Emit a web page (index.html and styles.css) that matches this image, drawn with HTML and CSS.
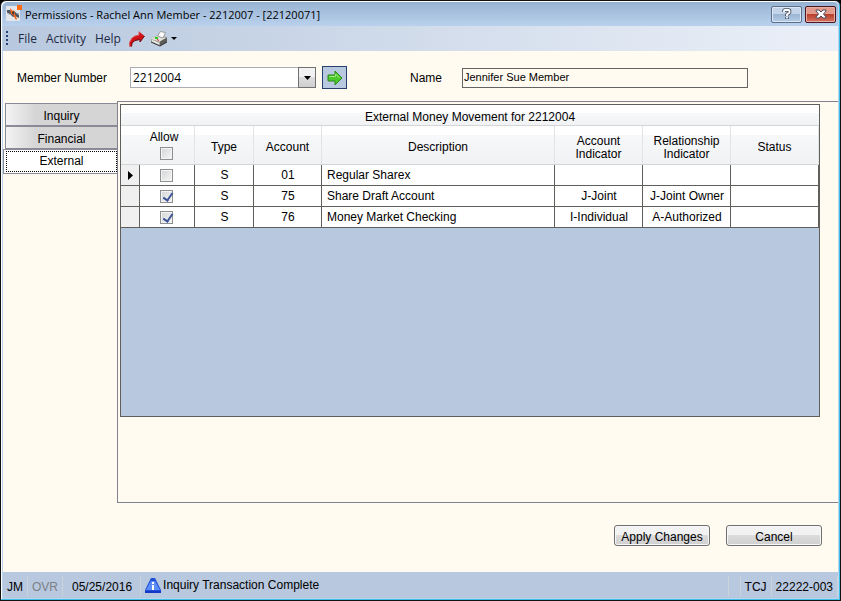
FILE: index.html
```html
<!DOCTYPE html>
<html lang="en">
<head>
    <meta charset="UTF-8">
    <meta name="viewport" content="width=device-width, initial-scale=1.0">
    <title>Permissions</title>
    <link rel="stylesheet" href="styles.css">
</head>
<body>
    <div class="window">
        <header class="title-bar">
            <svg class="app-icon" width="16" height="16" viewBox="0 0 16 16">
                <rect x="0" y="1" width="14" height="15" fill="#e3e6ea"/>
                <path d="M1 5h3l2 2 2-1 5 4v3l-4-2-2 1-3-3-3-1z" fill="#4b5560"/>
                <path d="M4 3l3 3 1-1 1 4 2 5-1 1-3-5-2-1z" fill="#f0641e"/>
                <path d="M1 7l3 2-1 1zM10 8h3v2z" fill="#a4a9ae"/>
                <path d="M7 6l1 1v3L6 8z" fill="#2b3038"/>
                <rect x="11" y="0" width="5" height="5" fill="#ff6a13"/>
            </svg>
            <h1>Permissions - Rachel Ann Member - 2212007 - [22120071]</h1>
            <button class="caption-button" type="button" aria-label="Help">
                <svg width="10" height="12" viewBox="0 0 10 12">
                    <path d="M2 4V3q0-1 1-1h3.500q1 0 1 1v1.500L5 6.500V8M5 9v2" fill="none" stroke="#4a5264" stroke-width="3.600"/>
                    <path d="M2 4V3q0-1 1-1h3.500q1 0 1 1v1.500L5 6.500V8M5 9v1.500" fill="none" stroke="#fff" stroke-width="1.800"/>
                </svg>
            </button>
            <button class="caption-button close" type="button" aria-label="Close">
                <svg width="12" height="10" viewBox="0 0 12 10">
                    <path d="M1 1h3l2 2 2-2h3v1L8.500 5 11 8v1H8L6 7 4 9H1V8l2.500-3L1 2z" fill="#fff" stroke="#4b4c5c"/>
                </svg>
            </button>
        </header>

        <nav class="menu-bar">
            <svg width="3" height="15" viewBox="0 0 3 15" fill="#27417b">
                <path d="M0 0h2v2H0zM0 4h2v2H0zM0 8h2v2H0zM0 12h2v2H0z"/>
            </svg>
            <a href="#">File</a>
            <a href="#">Activity</a>
            <a href="#">Help</a>
            <button class="tool" type="button" aria-label="Forward">
                <svg width="16" height="16" viewBox="0 0 16 16">
                    <path d="M.5 15.500v-4L3 7l3-2 4-1V.5L15.500 5 11 11V8.500L6 9.500l-3 2.500-.5 3.500z" fill="#cf1218"/>
                    <path d="M.5 15.500v-4L3 7l3-2 4-1V.5" fill="none" stroke="#e05a5c"/>
                    <path d="M15.500 5L11 11V8.500L6 9.500l-3 2.500-.5 3.500" fill="none" stroke="#6c0a0e"/>
                </svg>
            </button>
            <button class="tool" type="button" aria-label="Print">
                <svg width="26" height="16" viewBox="0 0 26 16">
                    <path d="M0 8l6-4 10 2v5l-7 4-9-4z" fill="#a9a9a4"/>
                    <path d="M0 8l6-3.500 9 2.500-6 3.500z" fill="#e2e2dc"/>
                    <path d="M9 10.500V15l7-4V6.500z" fill="#5c5c58"/>
                    <path d="M6.500 5l3-4.500 5 1L12 7z" fill="#fff" stroke="#999"/>
                    <path d="M1 9l7 3v1.500l-7-3z" fill="#f4f4ee"/>
                    <path d="M0 11l9 4 7-4" fill="none" stroke="#333"/>
                    <path d="M4 6.500l3 1" stroke="#23c423" stroke-width="2"/>
                    <path d="M6 8.500l2 1" stroke="#e02020"/>
                    <path d="M20 6h6l-3 3z" fill="#000"/>
                </svg>
            </button>
        </nav>

        <main class="content">
            <form class="member-form">
                <label class="member-label" for="member-number">Member Number</label>
                <div class="combo">
                    <select id="member-number">
                        <option>2212004</option>
                    </select>
                    <span class="combo-arrow">
                        <svg width="7" height="4" viewBox="0 0 7 4"><path d="M0 0h7L3.500 4z"/></svg>
                    </span>
                </div>
                <button class="go" type="button" aria-label="Go">
                    <svg width="16" height="16" viewBox="0 0 16 16">
                        <path d="M1 5h7V1l7 7-7 7v-4H1z" fill="#4cc72c" stroke="#2a8a1a"/>
                        <path d="M2.500 6.500h6V4l4 4" fill="none" stroke="#9cf07c"/>
                    </svg>
                </button>
                <label class="name-label" for="member-name">Name</label>
                <input class="name" id="member-name" type="text" value="Jennifer Sue Member" readonly>
            </form>

            <div class="tab-area">
                <div class="tabs" role="tablist">
                    <button class="tab" type="button" role="tab">Inquiry</button>
                    <button class="tab" type="button" role="tab">Financial</button>
                    <button class="tab active" type="button" role="tab" aria-selected="true"><span>External</span></button>
                </div>
                <section class="panel" role="tabpanel">
                    <div class="grid">
                        <table>
                            <caption>External Money Movement for 2212004</caption>
                            <colgroup>
                                <col class="col-marker">
                                <col class="col-allow">
                                <col class="col-type">
                                <col class="col-account">
                                <col>
                                <col class="col-wide">
                                <col class="col-wide">
                                <col class="col-wide">
                            </colgroup>
                            <thead>
                                <tr>
                                    <th class="marker"></th>
                                    <th class="allow">
                                        <label for="allow-all">Allow</label>
                                        <input class="check" id="allow-all" type="checkbox">
                                    </th>
                                    <th>Type</th>
                                    <th>Account</th>
                                    <th>Description</th>
                                    <th>Account Indicator</th>
                                    <th>Relationship Indicator</th>
                                    <th>Status</th>
                                </tr>
                            </thead>
                            <tbody>
                                <tr>
                                    <td class="marker"><svg width="5" height="9" viewBox="0 0 5 9"><path d="M0 0l5 4.500L0 9z"/></svg></td>
                                    <td class="pick"><input class="check" type="checkbox" aria-label="Allow 01"></td>
                                    <td>S</td>
                                    <td>01</td>
                                    <td class="description">Regular Sharex</td>
                                    <td></td>
                                    <td></td>
                                    <td></td>
                                </tr>
                                <tr>
                                    <td class="marker"></td>
                                    <td class="pick"><input class="check" type="checkbox" aria-label="Allow 75" checked></td>
                                    <td>S</td>
                                    <td>75</td>
                                    <td class="description">Share Draft Account</td>
                                    <td>J-Joint</td>
                                    <td>J-Joint Owner</td>
                                    <td></td>
                                </tr>
                                <tr>
                                    <td class="marker"></td>
                                    <td class="pick"><input class="check" type="checkbox" aria-label="Allow 76" checked></td>
                                    <td>S</td>
                                    <td>76</td>
                                    <td class="description">Money Market Checking</td>
                                    <td>I-Individual</td>
                                    <td>A-Authorized</td>
                                    <td></td>
                                </tr>
                            </tbody>
                        </table>
                    </div>
                </section>
            </div>

            <div class="actions">
                <button class="action" type="button">Apply Changes</button>
                <button class="action" type="button">Cancel</button>
            </div>
        </main>

        <footer class="status-bar">
            <span class="cell">JM</span>
            <span class="cell muted">OVR</span>
            <span class="cell date">05/25/2016</span>
            <span class="message">
                <svg width="16" height="16" viewBox="0 0 16 16">
                    <path d="M6 0h4l6 12v3H0v-3z" fill="#2450d8"/>
                    <path d="M6 3h4l5 9H1z" fill="#5b8df8"/>
                    <path d="M0 13h16v2H0z" fill="#1437c8"/>
                    <path d="M7 4h2v2H7zM7 7h2v5H7z" fill="#fff"/>
                </svg>
                Inquiry Transaction Complete
            </span>
            <span class="cell blank"></span>
            <span class="cell">TCJ</span>
            <span class="cell">22222-003</span>
        </footer>
    </div>
</body>
</html>
```
FILE: styles.css
```css
* {
    box-sizing: border-box;
}
body {
    margin: 0;
    background: #000;
    color: #000;
    font-family: "Liberation Sans", Arial, sans-serif;
    font-size: 12px;
}
button, input, select {
    font: inherit;
    color: inherit;
}
button {
    padding: 0;
}
svg {
    display: block;
}

/* Window frame */
.window {
    display: flex;
    flex-direction: column;
    min-height: 100vh;
    border: 1px solid #111;
    border-radius: 6px 6px 0 0;
    box-shadow: inset -1px -1px #3cc0e8, inset 1px 1px #fff;
    background: #bcd3ee;
    padding: 1px 2px 2px 2px;
}
.title-bar {
    display: flex;
    align-items: center;
    gap: 3px;
    height: 24px;
    padding: 0 2px 0 3px;
    border-radius: 5px 5px 0 0;
    background: linear-gradient(#98b3d2, #b9d1ed);
}
.title-bar h1 {
    flex: 1;
    margin: 0;
    font-family: "Open Sans", "Noto Sans", sans-serif;
    font-size: 11px;
    font-weight: normal;
}
.app-icon {
    margin-bottom: 2px;
}
.caption-button {
    display: flex;
    align-items: center;
    justify-content: center;
    width: 31px;
    height: 17px;
    border: 1px solid #5c6f8d;
    border-radius: 2px;
    background: linear-gradient(#c3d4e8 50%, #9cb5d2 50%, #b6cde8);
    box-shadow: inset 0 0 0 1px #dbe7f4;
}
.caption-button.close {
    border-color: #4a1420;
    background: linear-gradient(#e29a8c 50%, #b8402c 50%, #d37461);
    box-shadow: inset 0 0 0 1px #e8b0a5;
}

/* Menu */
.menu-bar {
    display: flex;
    align-items: center;
    height: 25px;
    padding-left: 3px;
    background: linear-gradient(to right, #b8c8de, #ebf0f8);
    font-family: "Open Sans", "Noto Sans", sans-serif;
}
.menu-bar a {
    margin-left: 9px;
    color: #1e2a44;
    text-decoration: none;
}
.tool {
    margin-left: 8px;
    border: 0;
    background: none;
}
.tool + .tool {
    margin-left: 6px;
}

/* Content */
.content {
    display: flex;
    flex-direction: column;
    flex: 1;
    background: #fffbf0;
}
.member-form {
    display: flex;
    align-items: center;
    height: 50px;
    padding: 3px 0 0 14px;
}
.member-label {
    width: 113px;
}
.combo {
    position: relative;
    width: 186px;
    height: 21px;
}
.combo select {
    width: 100%;
    height: 100%;
    padding: 0 0 0 2px;
    border: 1px solid #abadb3;
    border-radius: 0;
    background: #fff;
    appearance: none;
    font-family: "Open Sans", "Noto Sans", sans-serif;
}
.combo-arrow {
    position: absolute;
    top: 0;
    right: 0;
    bottom: 0;
    display: flex;
    align-items: center;
    justify-content: center;
    width: 18px;
    border: 1px solid #707070;
    background: linear-gradient(#f2f2f2 50%, #ddd 50%, #cfcfcf);
    pointer-events: none;
}
.go {
    display: flex;
    align-items: center;
    justify-content: center;
    width: 25px;
    height: 23px;
    margin-left: 6px;
    border: 1px solid #27406b;
    background: #b8c8de;
}
.name-label {
    width: 52px;
    margin-left: 63px;
}
.name {
    width: 286px;
    height: 20px;
    padding: 0 1px 2px;
    border: 1px solid #646464;
    background: #fffbf0;
    font-size: 11px;
}

/* Tabs */
.tab-area {
    display: flex;
    flex: 1;
}
.tabs {
    display: flex;
    flex-direction: column;
    align-items: flex-end;
    width: 114px;
    padding-top: 2px;
}
.tab {
    width: 112px;
    height: 23px;
    padding-top: 2px;
    border: 1px solid #8b8b98;
    border-width: 1px 0 1px 1px;
    background: linear-gradient(to right, #f4f4f4, #d5d5d5 30px);
}
.tab.active {
    width: 114px;
    height: 25px;
    padding: 1px 0 1px 2px;
    background: #fff;
}
.tab.active span {
    display: block;
    border: 1px dotted #000;
    line-height: 19px;
}
.panel {
    display: flex;
    flex: 1;
    padding: 2px 18px 85px 2px;
    border: 1px solid #82828f;
    border-right: 0;
}

/* Grid */
.grid {
    flex: 1;
    border: 1px solid #5f5f5c;
    background: #b8c8de;
}
table {
    width: 100%;
    border-collapse: separate;
    border-spacing: 0;
    table-layout: fixed;
}
caption {
    height: 21px;
    border-bottom: 1px solid #d5d5d8;
    background: linear-gradient(#fff 40%, #f7f8fa 40%, #f1f2f4);
    line-height: 24px;
}
.col-marker {
    width: 19px;
}
.col-allow {
    width: 55px;
}
.col-type {
    width: 59px;
}
.col-account {
    width: 68px;
}
.col-wide {
    width: 88px;
}
th {
    height: 39px;
    padding: 5px 4px 0;
    border-right: 1px solid #e3e4e6;
    border-bottom: 1px solid #d5d5d8;
    background: linear-gradient(#fff 25%, #f7f8fa 25%, #f1f2f4);
    font-weight: normal;
    line-height: 13px;
}
th.marker {
    border-right-color: transparent;
}
th.allow {
    padding: 0 6px 0 0;
}
.allow label {
    display: block;
    margin-bottom: 3px;
}
td {
    height: 21px;
    padding: 0 0 0 1px;
    border-right: 1px solid #5f5f5c;
    border-bottom: 1px solid #5f5f5c;
    background: #fff;
    text-align: center;
}
td.marker {
    background: #f0f0f0;
}
.marker svg {
    margin-left: 6px;
}
td.pick {
    padding: 0 1px 0 0;
}
td.description {
    padding-left: 5px;
    text-align: left;
}
.check {
    display: block;
    position: relative;
    width: 13px;
    height: 13px;
    margin: 0 auto;
    border: 1px solid #8e8f8f;
    background: linear-gradient(135deg, #d3d5d8, #f6f6f6);
    box-shadow: inset 0 0 0 1px #f4f4f4;
    appearance: none;
}
.allow .check {
    margin-left: 20px;
}
.check:checked::after {
    content: "";
    position: absolute;
    top: 0;
    left: 4px;
    width: 4px;
    height: 8px;
    border: solid #3b5296;
    border-width: 0 2px 2px 0;
    transform: rotate(35deg);
}

/* Buttons */
.actions {
    display: flex;
    justify-content: flex-end;
    gap: 16px;
    padding: 22px 16px 26px;
}
.action {
    width: 96px;
    height: 21px;
    padding-top: 2px;
    border: 1px solid #707070;
    border-radius: 3px;
    background: linear-gradient(#f2f2f2 50%, #dcdcdc 50%, #cfcfcf);
    box-shadow: inset 0 0 0 1px #f8f8f8;
}

/* Status bar */
.status-bar {
    display: flex;
    align-items: center;
    height: 26px;
    padding-top: 1px;
    background: #b8c8de;
}
.cell {
    height: 20px;
    padding: 0 4px;
    border-right: 1px solid #cdd3da;
    line-height: 23px;
}
.muted {
    color: #7b8087;
}
.date {
    padding: 0 8px 0 9px;
}
.message {
    display: flex;
    flex: 1;
    align-items: center;
    gap: 2px;
    padding-left: 4px;
    line-height: 23px;
}
.blank {
    width: 13px;
    border-left: 1px solid #cdd3da;
}
```
